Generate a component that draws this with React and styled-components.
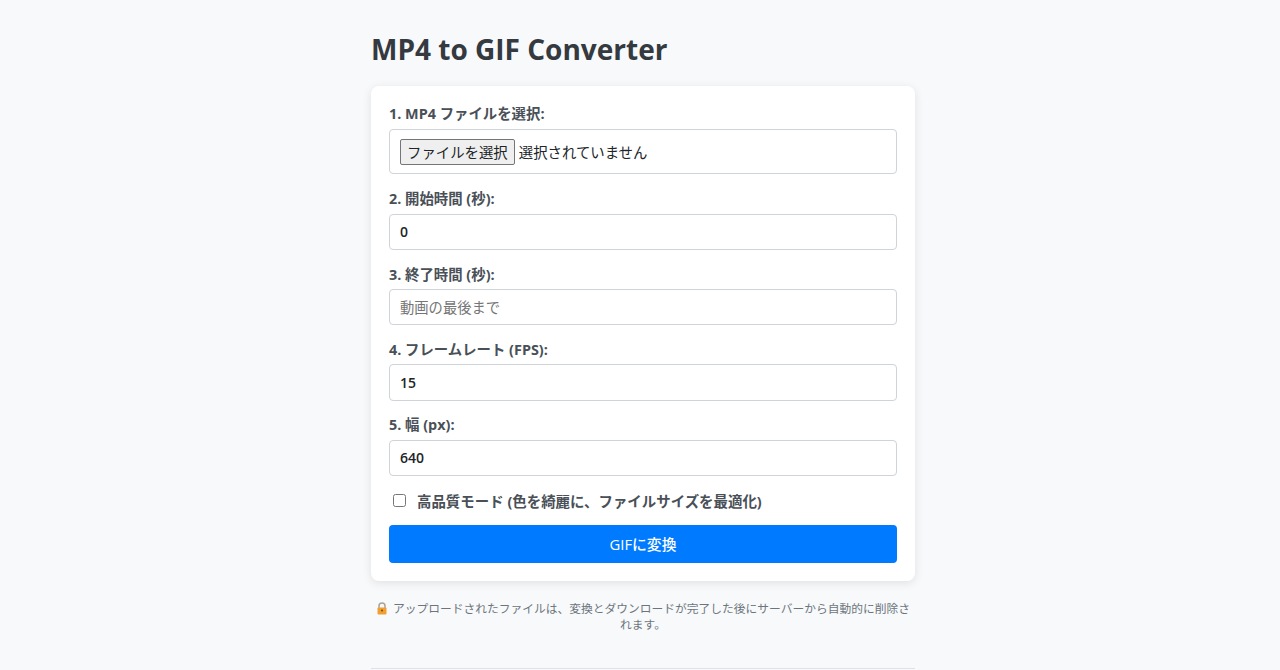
import React from "react";
import styled, { createGlobalStyle } from "styled-components";

const FONT = `"Open Sans", "Noto Sans CJK JP", sans-serif`;

const Global = createGlobalStyle`
  html, body { margin: 0; background: #f8f9fa; height: 670px; overflow: hidden; }
  * { box-sizing: border-box; }
  body { padding: 0 0 0 6px; font-family: ${FONT}; color: #343a40; }
`;

const Page = styled.main`
  width: 544px;
  margin: 0 auto;
  padding-top: 29px;
`;
const Title = styled.h1`
  margin: 0 0 16px;
  font-size: 28px;
  line-height: 41px;
  font-weight: 700;
  color: #343a40;
`;
const Card = styled.form`
  background: #fff;
  border-radius: 8px;
  box-shadow: 0 2px 10px rgba(0, 0, 0, 0.1);
  padding: 18px;
  display: flex;
  flex-direction: column;
`;
const Field = styled.div`
  display: flex;
  flex-direction: column;
  margin-bottom: ${(p) => p.$gap || 14.4}px;
`;
const Label = styled.label`
  font-size: 14.4px;
  line-height: 19.4px;
  font-weight: 700;
  color: #495057;
  margin-bottom: 5.13px;
`;
const FileBox = styled.div`
  height: 45.4px;
  border: 1px solid #ced4da;
  border-radius: 4px;
  display: flex;
  align-items: center;
  padding: 1px 10px 0;
  font-size: 14.4px;
  color: #212529;
`;
const FileButton = styled.button`
  height: 26px;
  padding: 0 6px;
  margin-right: 4px;
  font: 14.4px ${FONT};
  color: #212529;
  background: #efefef;
  border: 1px solid #767676;
  border-radius: 2px;
`;
const Input = styled.input`
  height: 36.4px;
  border: 1px solid #ced4da;
  border-radius: 4px;
  padding: 0 10px;
  font: 600 14px ${FONT};
  color: #212529;
  background: #fff;
  outline: none;
  &::placeholder {
    font-size: 14.3px;
    font-weight: 400;
    color: #757575;
  }
`;
const CheckRow = styled.label`
  display: flex;
  align-items: center;
  height: 20px;
  margin-bottom: 14.4px;
  padding-left: 4px;
  font-size: 14.45px;
  font-weight: 700;
  color: #495057;
`;
const Check = styled.input`
  width: 13px;
  height: 13px;
  margin: 0 11px 0 0;
`;
const Submit = styled.button`
  height: 38px;
  border: none;
  border-radius: 4px;
  background: #007bff;
  color: #fff;
  font: 500 14.8px ${FONT};
`;
const Note = styled.p`
  margin: 19px 0 0;
  padding: 0 4px;
  font-size: 11.75px;
  line-height: 16px;
  color: #6c757d;
  text-align: center;
`;
const LockIcon = styled.svg`
  width: 12px;
  height: 13px;
  vertical-align: -2px;
  margin-right: 5px;
`;
const Rule = styled.hr`
  margin: 36px 0 0;
  border: none;
  border-top: 1px solid #dee2e6;
`;

const fields = [
  { label: "2. 開始時間 (秒):", value: "0" },
  { label: "3. 終了時間 (秒):", placeholder: "動画の最後まで" },
  { label: "4. フレームレート (FPS):", value: "15" },
  { label: "5. 幅 (px):", value: "640" },
];

export default function App() {
  return (
    <Page>
      <Global />
      <Title>MP4 to GIF Converter</Title>
      <Card onSubmit={(e) => e.preventDefault()}>
        <Field $gap={15.34}>
          <Label>1. MP4 ファイルを選択:</Label>
          <FileBox>
            <FileButton type="button">ファイルを選択</FileButton>
            <span>選択されていません</span>
          </FileBox>
        </Field>
        {fields.map((f) => (
          <Field key={f.label}>
            <Label>{f.label}</Label>
            <Input type="text" defaultValue={f.value} placeholder={f.placeholder} />
          </Field>
        ))}
        <CheckRow>
          <Check type="checkbox" />
          高品質モード (色を綺麗に、ファイルサイズを最適化)
        </CheckRow>
        <Submit type="submit">GIFに変換</Submit>
      </Card>
      <Note>
        <LockIcon viewBox="0 0 12 13" aria-hidden="true">
          <path d="M3 6V4a3 3 0 0 1 6 0v2" fill="none" stroke="#a8a29a" strokeWidth="1.5" />
          <rect x="1.5" y="5.5" width="9" height="7" rx="1" fill="#f0a030" />
          <circle cx="6" cy="8.5" r="1" fill="#7a4a10" />
        </LockIcon>
        アップロードされたファイルは、変換とダウンロードが完了した後にサーバーから自動的に削除されます。
      </Note>
      <Rule />
    </Page>
  );
}
